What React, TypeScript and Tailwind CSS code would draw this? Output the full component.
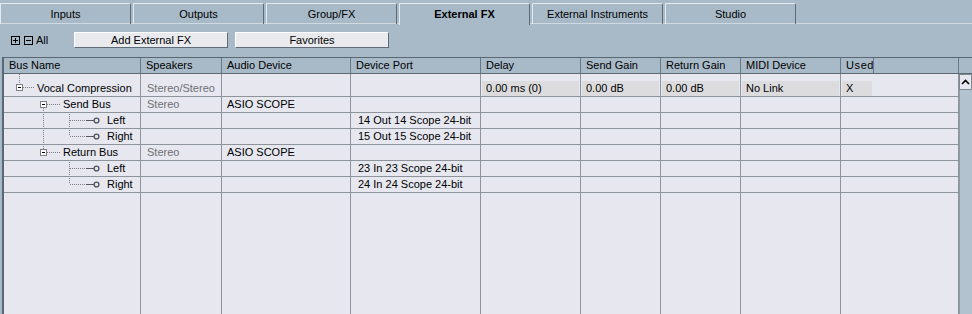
const cols = "grid-cols-[137px_81px_129px_130px_100px_80px_80px_100px_118px]";

type Row = {
  name: string;
  tree: string;
  speakers?: string;
  device?: string;
  port?: string;
  delay?: string;
  send?: string;
  ret?: string;
  midi?: string;
  used?: string;
};

const rows: Row[] = [
  {
    name: "Vocal Compression",
    tree: "root",
    speakers: "Stereo/Stereo",
    delay: "0.00 ms (0)",
    send: "0.00 dB",
    ret: "0.00 dB",
    midi: "No Link",
    used: "X",
  },
  { name: "Send Bus", tree: "busA", speakers: "Stereo", device: "ASIO SCOPE" },
  { name: "Left", tree: "leafA1", port: "14 Out 14 Scope 24-bit" },
  { name: "Right", tree: "leafA2", port: "15 Out 15 Scope 24-bit" },
  { name: "Return Bus", tree: "busB", speakers: "Stereo", device: "ASIO SCOPE" },
  { name: "Left", tree: "leafB1", port: "23 In 23 Scope 24-bit" },
  { name: "Right", tree: "leafB2", port: "24 In 24 Scope 24-bit" },
];

const dot = { stroke: "#7c7f86", strokeWidth: 1, strokeDasharray: "1 1" };

function Box({ x, y }: { x: number; y: number }) {
  return (
    <g>
      <rect x={x + 0.5} y={y + 0.5} width={6} height={6} fill="#fff" stroke="#7c7f86" />
      <line x1={x + 2} y1={y + 3.5} x2={x + 5} y2={y + 3.5} stroke="#000" />
    </g>
  );
}

function Tree({ kind }: { kind: string }) {
  if (kind === "root") {
    return (
      <svg width={33} height={22} className="shrink-0" shapeRendering="crispEdges">
        <line x1={15.5} y1={0} x2={15.5} y2={10} {...dot} />
        <Box x={12} y={10} />
        <line x1={19} y1={13.5} x2={31} y2={13.5} {...dot} />
      </svg>
    );
  }
  if (kind === "busA" || kind === "busB") {
    return (
      <svg width={59} height={15} className="shrink-0" shapeRendering="crispEdges">
        {kind === "busA" ? (
          <line x1={39.5} y1={11} x2={39.5} y2={16} {...dot} />
        ) : (
          <line x1={39.5} y1={-1} x2={39.5} y2={4} {...dot} />
        )}
        <Box x={36} y={4} />
        <line x1={43} y1={7.5} x2={56} y2={7.5} {...dot} />
      </svg>
    );
  }
  const last = kind.endsWith("2");
  const passA = kind.startsWith("leafA");
  return (
    <svg width={103} height={15} className="shrink-0" shapeRendering="crispEdges">
      {passA && <line x1={39.5} y1={-1} x2={39.5} y2={16} {...dot} />}
      <line x1={65.5} y1={-1} x2={65.5} y2={last ? 7 : 16} {...dot} />
      <line x1={66} y1={7.5} x2={82} y2={7.5} {...dot} />
      <line x1={82} y1={7.5} x2={90} y2={7.5} stroke="#55595f" />
      <circle
        cx={92.5}
        cy={7.5}
        r={2.4}
        fill="#e6e7ef"
        stroke="#55595f"
        strokeWidth={1.4}
        shapeRendering="geometricPrecision"
      />
    </svg>
  );
}

function ValueBox({ text, w }: { text?: string; w?: string }) {
  if (!text) return null;
  return (
    <div className={`h-[15px] bg-[#dcdcde] pl-[4px] leading-[15px] ${w ?? "ml-[1px] mr-[1px]"}`}>
      {text}
    </div>
  );
}

function Tab({ label, active }: { label: string; active?: boolean }) {
  return (
    <div
      className={`w-[131px] h-[21px] flex items-center justify-center border-t border-l border-r border-t-[#e4ebf0] border-l-[#e4ebf0] border-r-[#5f6c77] rounded-tr-[2px] ${
        active ? "font-bold h-[22px] -mb-[1px] bg-[#a8bac8]" : ""
      }`}
    >
      {label}
    </div>
  );
}

function Button({ label }: { label: string }) {
  return (
    <div className="w-[154px] h-[16px] bg-[#e8eaee] border border-t-[#ffffff] border-l-[#ffffff] border-r-[#5f6c77] border-b-[#5f6c77] flex items-center justify-center">
      {label}
    </div>
  );
}

export default function App() {
  const header = [
    "Bus Name",
    "Speakers",
    "Audio Device",
    "Device Port",
    "Delay",
    "Send Gain",
    "Return Gain",
    "MIDI Device",
  ];
  return (
    <div className="w-[972px] h-[314px] overflow-hidden bg-[#a8bac8] text-black text-[11px] font-['Liberation_Sans',Arial,sans-serif] flex flex-col">
      {/* Tabs */}
      <div className="h-[24px] pt-[3px] flex gap-[2px] border-b border-[#cfd9e1] shrink-0">
        <Tab label="Inputs" />
        <Tab label="Outputs" />
        <Tab label="Group/FX" />
        <Tab label="External FX" active />
        <Tab label="External Instruments" />
        <Tab label="Studio" />
      </div>

      {/* Toolbar */}
      <div className="h-[33px] shrink-0 flex items-start pt-[8px]">
        <div className="flex items-center ml-[11px] h-[16px] w-[63px]">
          <svg width={22} height={9} shapeRendering="crispEdges">
            <rect x={0.5} y={0.5} width={8} height={8} fill="none" stroke="#000" />
            <line x1={2} y1={4.5} x2={7} y2={4.5} stroke="#000" />
            <line x1={4.5} y1={2} x2={4.5} y2={7} stroke="#000" />
            <rect x={13.5} y={0.5} width={8} height={8} fill="none" stroke="#000" />
            <line x1={15} y1={4.5} x2={20} y2={4.5} stroke="#000" />
          </svg>
          <span className="ml-[3px]">All</span>
        </div>
        <div className="flex gap-[7px]">
          <Button label="Add External FX" />
          <Button label="Favorites" />
        </div>
      </div>

      {/* Table */}
      <div className="flex flex-1 min-h-0 ml-[2px]">
        <div className="w-[957px] flex flex-col border-l-2 border-[#5a6874]">
          <div className={`grid ${cols} h-[17px] border-t border-b border-[#5a6874] shrink-0`}>
            {header.map((h) => (
              <div key={h} className="border-r border-[#6a7883] pl-[5px] leading-[15px] truncate">
                {h}
              </div>
            ))}
            <div className="grid grid-cols-[33px_85px]">
              <div className="border-r border-[#6a7883] pl-[5px] leading-[15px] overflow-hidden whitespace-nowrap tracking-[0.6px]">
                Used
              </div>
              <div className="border-r border-[#6a7883]" />
            </div>
          </div>

          <div className="flex-1 flex flex-col bg-[#e6e7ef]">
            {rows.map((r, i) => {
              const first = i === 0;
              const cell = `border-r border-[#8e949c] ${first ? "pt-[7px]" : ""}`;
              return (
                <div
                  key={i}
                  className={`grid ${cols} border-b border-[#8e949c] ${first ? "h-[23px]" : "h-[16px]"}`}
                >
                  <div className={`${cell} flex items-start overflow-hidden`}>
                    <div className={`flex ${first ? "-mt-[7px] h-[22px] items-end" : "h-[15px] items-center"}`}>
                      <Tree kind={r.tree} />
                      <span className="whitespace-nowrap leading-[15px]">{r.name}</span>
                    </div>
                  </div>
                  <div className={`${cell} pl-[6px] leading-[15px] text-[#6e7075]`}>{r.speakers}</div>
                  <div className={`${cell} pl-[5px] leading-[15px]`}>{r.device}</div>
                  <div className={`${cell} pl-[7px] leading-[15px]`}>{r.port}</div>
                  <div className={cell}>
                    <ValueBox text={r.delay} />
                  </div>
                  <div className={cell}>
                    <ValueBox text={r.send} />
                  </div>
                  <div className={cell}>
                    <ValueBox text={r.ret} />
                  </div>
                  <div className={cell}>
                    <ValueBox text={r.midi} />
                  </div>
                  <div className={cell}>
                    <ValueBox text={r.used} w="ml-[1px] w-[30px]" />
                  </div>
                </div>
              );
            })}
            <div className={`grid ${cols} flex-1`}>
              {Array.from({ length: 9 }).map((_, i) => (
                <div key={i} className="border-r border-[#8e949c]" />
              ))}
            </div>
          </div>
        </div>

        {/* Scrollbar */}
        <div className="w-[13px] flex flex-col">
          <div className="h-[17px] border-t border-b border-[#5a6874] shrink-0" />
          <div className="h-[16px] bg-[#e6e7ef] border border-[#7d8a95] flex items-center justify-center shrink-0">
            <svg width={9} height={6}>
              <polyline points="1,5 4.5,1.5 8,5" fill="none" stroke="#000" strokeWidth={1.6} />
            </svg>
          </div>
          <div className="flex-1 bg-[#b2c2ce] border-l border-[#8e9ba6]" />
        </div>
      </div>
    </div>
  );
}
